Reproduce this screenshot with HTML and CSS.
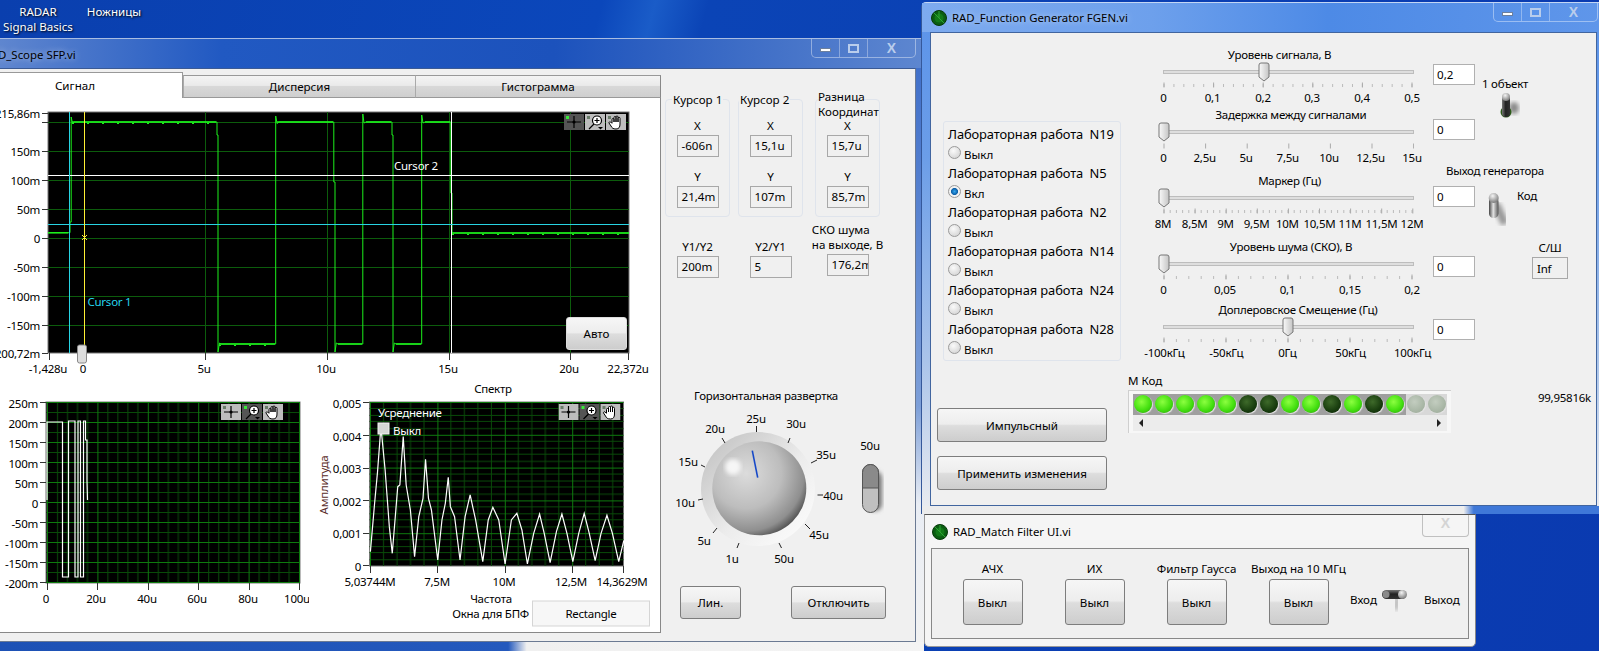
FILE: index.html
```html
<!DOCTYPE html>
<html lang="ru">
<head>
    <meta charset="UTF-8">
    <meta name="viewport" content="width=device-width, initial-scale=1.0">
    <title>RADAR Signal Basics</title>
    <link rel="stylesheet" href="styles.css">
</head>
<body>

<!-- shared drawings -->
<svg class="defs" aria-hidden="true">
    <defs>
        <linearGradient id="knobRim" x1="0" y1="0" x2="1" y2="1">
            <stop offset="0" stop-color="#bdbdbd"/>
            <stop offset="0.55" stop-color="#ececec"/>
            <stop offset="1" stop-color="#ffffff"/>
        </linearGradient>
        <radialGradient id="knobFace" cx="0.36" cy="0.34" r="0.75">
            <stop offset="0" stop-color="#dcdcdc"/>
            <stop offset="0.5" stop-color="#bdbdbd"/>
            <stop offset="0.82" stop-color="#8f8f8f"/>
            <stop offset="1" stop-color="#3c3c3c"/>
        </radialGradient>
        <linearGradient id="thumbFill" x1="0" y1="0" x2="1" y2="0">
            <stop offset="0" stop-color="#fafafa"/>
            <stop offset="1" stop-color="#c4c4c4"/>
        </linearGradient>
        <linearGradient id="darkLever" x1="0" y1="0" x2="1" y2="0">
            <stop offset="0" stop-color="#777"/>
            <stop offset="0.45" stop-color="#222"/>
            <stop offset="1" stop-color="#333"/>
        </linearGradient>
        <linearGradient id="lightLever" x1="0" y1="0" x2="1" y2="0">
            <stop offset="0" stop-color="#444"/>
            <stop offset="0.45" stop-color="#e4e4e4"/>
            <stop offset="1" stop-color="#555"/>
        </linearGradient>
        <linearGradient id="sideLever" x1="0" y1="0" x2="0" y2="1">
            <stop offset="0" stop-color="#777"/>
            <stop offset="0.45" stop-color="#222"/>
            <stop offset="1" stop-color="#333"/>
        </linearGradient>
        <radialGradient id="leverBall" cx="0.4" cy="0.3" r="0.7">
            <stop offset="0" stop-color="#f4f4f4"/>
            <stop offset="1" stop-color="#7c7c7c"/>
        </radialGradient>
        <filter id="soft"><feGaussianBlur stdDeviation="2"/></filter>

        <pattern id="gridWave" x="47" y="402" width="50.4" height="20" patternUnits="userSpaceOnUse">
            <path class="grid-minor" d="M10.5 0V20M20.5 0V20M30.5 0V20M40.5 0V20M0 10.5H50.4"/>
            <path class="grid-major" d="M0.5 0V20M0 0.5H50.4"/>
        </pattern>
        <pattern id="gridSpectrum" x="370" y="402" width="67.4" height="32.8" patternUnits="userSpaceOnUse">
            <path class="grid-minor" d="M13.5 0V32.8M27 0V32.8M40.5 0V32.8M54 0V32.8M0 6.5H67.4M0 13.5H67.4M0 19.5H67.4M0 26.5H67.4"/>
            <path class="grid-major" d="M0.5 0V32.8M0 0.5H67.4"/>
        </pattern>

        <symbol id="radarIcon" viewBox="0 0 16 16">
            <circle cx="8" cy="8" r="7.5" fill="#0b5d12" stroke="#063a09"/>
            <circle cx="8" cy="8" r="4.5" fill="#127a18"/>
            <path d="M3 3L13 13M8 1V8" stroke="#2fa635" fill="none"/>
        </symbol>

        <g id="toolGlyphs">
            <path class="glyph" d="M10 2V14M3 8H17"/>
            <circle cx="10" cy="8" r="1.6" fill="#000"/>
            <g transform="translate(21 0)">
                <circle class="glyph-lens" cx="12" cy="6.5" r="4.5"/>
                <path class="glyph" d="M12 4V9M9.5 6.5H14.5M9 10L4 15"/>
                <path d="M13 13H18L15.5 15.5Z" fill="#000"/>
            </g>
            <path class="glyph-hand" transform="translate(42 0)" d="M6 9V5.5a1 1 0 0 1 2 0V8V3.5a1 1 0 0 1 2 0V8V3a1 1 0 0 1 2 0V8V4.3a1 1 0 0 1 2 0V10c0 3-1 5-4 5s-4-1-5-3l-2-3a1 1 0 0 1 1.6-1L6 9.5"/>
        </g>
        <symbol id="paletteCursor" viewBox="0 0 62 16">
            <rect class="tool tool-on" width="20" height="16"/>
            <rect class="tool" x="21" width="20" height="16"/>
            <rect class="tool" x="42" width="20" height="16"/>
            <rect class="tool-led led-lit" x="2" y="2" width="3" height="3"/>
            <rect class="tool-led" x="23" y="2" width="3" height="3"/>
            <rect class="tool-led" x="44" y="2" width="3" height="3"/>
            <use href="#toolGlyphs"/>
        </symbol>
        <symbol id="paletteZoom" viewBox="0 0 62 16">
            <rect class="tool" width="20" height="16"/>
            <rect class="tool tool-on" x="21" width="20" height="16"/>
            <rect class="tool" x="42" width="20" height="16"/>
            <rect class="tool-led" x="2" y="2" width="3" height="3"/>
            <rect class="tool-led led-lit" x="23" y="2" width="3" height="3"/>
            <rect class="tool-led" x="44" y="2" width="3" height="3"/>
            <use href="#toolGlyphs"/>
        </symbol>
        <symbol id="thumb" viewBox="-6 -10 12 20" overflow="visible">
            <path class="thumb" d="M-5 -7a2 2 0 0 1 2-2h6a2 2 0 0 1 2 2V5L0 9L-5 5Z"/>
        </symbol>
    </defs>
</svg>

<div class="desktop">

    <div class="desktop-icons">
        <div class="desktop-icon">RADAR<br>Signal Basics</div>
        <div class="desktop-icon">Ножницы</div>
    </div>

    <!-- scope window -->
    <section class="window scope">
        <header class="titlebar">
            <span class="title-text title-clipped">D_Scope SFP.vi</span>
            <div class="win-controls">
                <span class="ctl ctl-min"><i></i></span>
                <span class="ctl ctl-max"><i></i></span>
                <span class="ctl ctl-close">X</span>
            </div>
        </header>
        <div class="panel scope-panel">
            <div class="tab-area">
                <div class="tabs">
                    <div class="tab tab-active">Сигнал</div>
                    <div class="tab tab-two">Дисперсия</div>
                    <div class="tab tab-three">Гистограмма</div>
                </div>
                <div class="tab-body">
                    <div class="main-chart">
                        <svg class="chart" width="660" height="282" viewBox="0 98 660 282">
                            <rect class="plot" x="48" y="112" width="581" height="241"/>
                            <path class="grid-main" d="M48 122.5H629M48 151.5H629M48 180.5H629M48 209.5H629M48 238.5H629M48 267.5H629M48 296.5H629M48 325.5H629M205.5 112V353M327.5 112V353M449.5 112V353M570.5 112V353"/>
                            <path class="trace" d="M48 232.7H70V222H71.2V117L72.5 123.5L74 122H217V135H218V352L219.5 343L221 344H275.7V116L277 123.5L279 122H333.8V182H335V352L336.3 343L338 344H362.8V114L364 123L366 122H392V135H393V352L394.3 343L396 344H421.7V115L423 123L425 122H450.8V193H452V233H629"/>
                            <path class="trace-thick" d="M48 232.7H68M72 122H216M277 122H333M366 122H391M425 122H450M219 344H275M338 344H362M396 344H421M452 233H629"/>
                            <path class="trace-noise" d="M72 123.5H216M219 345.5H275M452 234.5H629"/>
                            <path class="cursor-white" d="M48 175.5H629M451.5 112V353"/>
                            <path class="cursor-cyan" d="M48 224.5H629M69.5 112V353"/>
                            <path class="cursor-yellow" d="M84.5 112V353M82 235L87 240M87 235L82 240"/>
                            <text class="label-white" x="394" y="165">Cursor 2</text>
                            <text class="label-cyan" x="87.5" y="301">Cursor 1</text>
                            <use href="#paletteCursor" x="564" y="114" width="62" height="16"/>

                            <path class="axis" d="M42 113.5H48M42 122.5H48M42 151.5H48M42 180.5H48M42 209.5H48M42 238.5H48M42 267.5H48M42 296.5H48M42 325.5H48M42 353.5H48M49.5 353V360M205.5 353V360M327.5 353V360M449.5 353V360M570.5 353V360M628.5 353V360"/>
                            <text class="end" x="40" y="113">215,86m</text>
                            <text class="end" x="40" y="151">150m</text>
                            <text class="end" x="40" y="180">100m</text>
                            <text class="end" x="40" y="209">50m</text>
                            <text class="end" x="40" y="238">0</text>
                            <text class="end" x="40" y="267">-50m</text>
                            <text class="end" x="40" y="296">-100m</text>
                            <text class="end" x="40" y="325">-150m</text>
                            <text class="end" x="40" y="353">-200,72m</text>
                            <text class="mid" x="48" y="368">-1,428u</text>
                            <text class="mid" x="83" y="368">0</text>
                            <text class="mid" x="204" y="368">5u</text>
                            <text class="mid" x="326" y="368">10u</text>
                            <text class="mid" x="448" y="368">15u</text>
                            <text class="mid" x="569" y="368">20u</text>
                            <text class="mid" x="628" y="368">22,372u</text>
                            <rect class="scroll-thumb" x="77.5" y="345" width="9" height="18" rx="2"/>
                        </svg>
                        <button class="lv-btn auto-btn">Авто</button>
                    </div>

                    <div class="lower-charts">
                        <svg class="chart" width="309" height="253" viewBox="0 380 309 253">
                            <rect class="plot" x="46" y="402" width="254" height="181"/>
                            <rect fill="url(#gridWave)" x="46" y="402" width="254" height="181"/>
                            <path class="trace-white" d="M47 500V422H62.5V577H68.5V421H75V577H78V421H80.5V577H83.5V421H85.5V440H87V481L87.5 500"/>
                            <use href="#paletteZoom" x="221" y="404" width="62" height="16"/>
                            <path class="axis" d="M40 402.5H46M40 422.5H46M40 442.5H46M40 462.5H46M40 482.5H46M40 502.5H46M40 522.5H46M40 542.5H46M40 562.5H46M40 582.5H46M47.5 583V590M97.5 583V590M148.5 583V590M198.5 583V590M249.5 583V590M299.5 583V590"/>
                            <text class="end" x="38" y="403">250m</text>
                            <text class="end" x="38" y="423">200m</text>
                            <text class="end" x="38" y="443">150m</text>
                            <text class="end" x="38" y="463">100m</text>
                            <text class="end" x="38" y="483">50m</text>
                            <text class="end" x="38" y="503">0</text>
                            <text class="end" x="38" y="523">-50m</text>
                            <text class="end" x="38" y="543">-100m</text>
                            <text class="end" x="38" y="563">-150m</text>
                            <text class="end" x="38" y="583">-200m</text>
                            <text class="mid" x="46" y="598">0</text>
                            <text class="mid" x="96" y="598">20u</text>
                            <text class="mid" x="147" y="598">40u</text>
                            <text class="mid" x="197" y="598">60u</text>
                            <text class="mid" x="248" y="598">80u</text>
                            <text class="mid" x="297" y="598">100u</text>
                        </svg>
                        <svg class="chart" width="351" height="253" viewBox="309 380 351 253">
                            <text class="mid" x="493" y="388">Спектр</text>
                            <rect class="plot" x="369.5" y="402" width="254" height="164"/>
                            <rect fill="url(#gridSpectrum)" x="369.5" y="402" width="254" height="164"/>
                            <!-- points traced from the screenshot, scale maps them onto the plot -->
                            <polyline class="trace-white scaled" transform="matrix(.4209 0 0 .3333 0 370)" points="880,545 890,400 897,305 905,170 915,300 925,470 932,550 945,350 950,345 958,200 965,345 975,420 985,560 995,440 1005,385 1011,268 1018,385 1025,420 1040,570 1050,450 1058,400 1065,322 1070,410 1080,440 1093,570 1105,440 1117,375 1130,450 1147,575 1160,450 1171,412 1185,450 1200,582 1215,450 1228,430 1240,480 1253,582 1268,490 1282,432 1293,490 1307,578 1322,485 1335,432 1347,490 1361,575 1375,490 1388,430 1400,490 1414,572 1428,490 1442,436 1455,490 1470,575 1482,512"/>
                            <text class="label-white" x="378" y="412">Усреднение</text>
                            <rect class="check" x="378" y="423" width="11" height="11"/>
                            <text class="label-white" x="393" y="430">Выкл</text>
                            <use href="#paletteZoom" x="558.5" y="404" width="62" height="16"/>
                            <path class="axis" d="M363 402.5H369M363 435.5H369M363 468.5H369M363 500.5H369M363 533.5H369M363 565.5H369M370.5 566V573M437.5 566V573M505.5 566V573M572.5 566V573M623.5 566V573"/>
                            <text class="end" x="361" y="403">0,005</text>
                            <text class="end" x="361" y="436">0,004</text>
                            <text class="end" x="361" y="468">0,003</text>
                            <text class="end" x="361" y="501">0,002</text>
                            <text class="end" x="361" y="533">0,001</text>
                            <text class="end" x="361" y="566">0</text>
                            <text class="axis-name" transform="translate(323 485) rotate(-90)">Амплитуда</text>
                            <text class="mid" x="370" y="581">5,03744M</text>
                            <text class="mid" x="437" y="581">7,5M</text>
                            <text class="mid" x="504" y="581">10M</text>
                            <text class="mid" x="571" y="581">12,5M</text>
                            <text class="mid" x="622" y="581">14,3629M</text>
                            <text class="mid" x="491" y="598">Частота</text>
                            <text class="end" x="529" y="613">Окна для БПФ</text>
                            <rect class="ring" x="532.5" y="601" width="117" height="25"/>
                            <text class="mid" x="591" y="613">Rectangle</text>
                        </svg>
                    </div>
                </div>
            </div>

            <div class="side">
                <div class="cursor-groups">
                    <div class="group group-one">
                        <div class="group-title">Курсор 1</div>
                        <div class="readout-label">X</div>
                        <div class="readout">-606n</div>
                        <div class="readout-label next">Y</div>
                        <div class="readout">21,4m</div>
                    </div>
                    <div class="group group-two">
                        <div class="group-title">Курсор 2</div>
                        <div class="readout-label">X</div>
                        <div class="readout">15,1u</div>
                        <div class="readout-label next">Y</div>
                        <div class="readout">107m</div>
                    </div>
                    <div class="group group-three">
                        <div class="group-title">Разница<br>Координат</div>
                        <div class="readout-label">X</div>
                        <div class="readout">15,7u</div>
                        <div class="readout-label next">Y</div>
                        <div class="readout">85,7m</div>
                    </div>
                </div>
                <div class="ratio-row">
                    <div class="ratio">
                        <div class="readout-label">Y1/Y2</div>
                        <div class="readout">200m</div>
                    </div>
                    <div class="ratio ratio-two">
                        <div class="readout-label">Y2/Y1</div>
                        <div class="readout">5</div>
                    </div>
                    <div class="ratio ratio-three">
                        <div class="ratio-note">СКО шума<br>на выходе, В</div>
                        <div class="readout readout-clip">176,2m</div>
                    </div>
                </div>
                <svg class="chart knob-view" width="255" height="190" viewBox="661 380 255 190">
                    <text x="694" y="396">Горизонтальная развертка</text>
                    <circle cx="758" cy="490" r="57" fill="url(#knobRim)"/>
                    <circle cx="759.3" cy="489.3" r="47" fill="url(#knobFace)"/>
                    <circle cx="733" cy="468" r="8" fill="#f6f6f6" filter="url(#soft)"/>
                    <path class="needle" d="M752.3 451.7L757.7 478.7"/>
                    <path class="knob-ticks" d="M756.5 427V433M790 439L788 444M817 461L811 464M817.5 496H823M805 525L810 530M779 544L781.5 549M739 544L737 549M717 529L713 534M703 500L698 501M705 468L701 466M725 444L722 439"/>
                    <text class="mid" x="756" y="419">25u</text>
                    <text class="mid" x="796" y="424">30u</text>
                    <text class="mid" x="826" y="455">35u</text>
                    <text class="mid" x="833" y="496">40u</text>
                    <text class="mid" x="819" y="535">45u</text>
                    <text class="mid" x="784" y="559">50u</text>
                    <text class="mid" x="732" y="559">1u</text>
                    <text class="mid" x="704" y="541">5u</text>
                    <text class="mid" x="685" y="503">10u</text>
                    <text class="mid" x="688" y="462">15u</text>
                    <text class="mid" x="715" y="429">20u</text>
                    <text class="mid" x="870" y="446">50u</text>
                    <rect x="868" y="472" width="14" height="40" rx="7" fill="#777" filter="url(#soft)"/>
                    <rect class="pill-low" x="862.5" y="465.5" width="16" height="48" rx="8"/>
                    <path class="pill-high" d="M862.5 489V473.5a8 8 0 0 1 16 0V489Z"/>
                </svg>
                <div class="side-buttons">
                    <button class="lv-btn lin-btn">Лин.</button>
                    <button class="lv-btn off-btn">Отключить</button>
                </div>
            </div>
        </div>
        <div class="scope-foot"></div>
    </section>

    <!-- function generator window -->
    <section class="window fgen">
        <header class="titlebar">
            <svg class="vi-icon" width="16" height="16"><use href="#radarIcon"/></svg>
            <span class="title-text">RAD_Function Generator FGEN.vi</span>
            <div class="win-controls">
                <span class="ctl ctl-min"><i></i></span>
                <span class="ctl ctl-max"><i></i></span>
                <span class="ctl ctl-close">X</span>
            </div>
        </header>
        <div class="panel fgen-panel">
            <div class="fgen-left">
                <div class="lab-group">
                    <div class="lab-title">Лабораторная работа&nbsp; N19</div>
                    <div class="lab-choice"><span class="radio"></span>Выкл</div>
                    <div class="lab-title">Лабораторная работа&nbsp; N5</div>
                    <div class="lab-choice"><span class="radio radio-on"></span>Вкл</div>
                    <div class="lab-title">Лабораторная работа&nbsp; N2</div>
                    <div class="lab-choice"><span class="radio"></span>Выкл</div>
                    <div class="lab-title">Лабораторная работа&nbsp; N14</div>
                    <div class="lab-choice"><span class="radio"></span>Выкл</div>
                    <div class="lab-title">Лабораторная работа&nbsp; N24</div>
                    <div class="lab-choice"><span class="radio"></span>Выкл</div>
                    <div class="lab-title">Лабораторная работа&nbsp; N28</div>
                    <div class="lab-choice"><span class="radio"></span>Выкл</div>
                </div>
                <button class="lv-btn wide-btn pulse-btn">Импульсный</button>
                <button class="lv-btn wide-btn apply-btn">Применить изменения</button>
            </div>

            <div class="fgen-middle">
                <div class="slider-row">
                    <svg class="chart" width="312" height="58" viewBox="1120 46 312 58">
                        <text class="mid" x="1278.5" y="54">Уровень сигнала, В</text>
                        <rect class="track" x="1162.5" y="70.5" width="250" height="3"/>
                        <use href="#thumb" x="1257" y="62" width="12" height="20"/>
                        <path class="ticks-minor" stroke-dasharray="1 8.92" d="M1162.5 85.5H1413"/>
                        <path class="ticks-major" stroke-dasharray="1 48.6" d="M1162.5 85H1413"/>
                        <text class="mid" x="1162.5" y="97">0</text>
                        <text class="mid" x="1211.5" y="97">0,1</text>
                        <text class="mid" x="1262" y="97">0,2</text>
                        <text class="mid" x="1311" y="97">0,3</text>
                        <text class="mid" x="1361" y="97">0,4</text>
                        <text class="mid" x="1411" y="97">0,5</text>
                    </svg>
                    <div class="num-box">0,2</div>
                </div>
                <div class="slider-row row-delay">
                    <svg class="chart" width="312" height="58" viewBox="1120 106 312 58">
                        <text class="mid" x="1290" y="114">Задержка между сигналами</text>
                        <rect class="track" x="1162.5" y="130.5" width="250" height="3"/>
                        <use href="#thumb" x="1157" y="122" width="12" height="20"/>
                        <path class="ticks-major" stroke-dasharray="1 40.6" d="M1162.5 146H1413"/>
                        <text class="mid" x="1162.5" y="157">0</text>
                        <text class="mid" x="1203.7" y="157">2,5u</text>
                        <text class="mid" x="1245" y="157">5u</text>
                        <text class="mid" x="1286.8" y="157">7,5u</text>
                        <text class="mid" x="1328" y="157">10u</text>
                        <text class="mid" x="1369.6" y="157">12,5u</text>
                        <text class="mid" x="1411" y="157">15u</text>
                    </svg>
                    <div class="num-box">0</div>
                </div>
                <div class="slider-row row-marker">
                    <svg class="chart" width="312" height="58" viewBox="1120 172 312 58">
                        <text class="mid" x="1288.5" y="180">Маркер (Гц)</text>
                        <rect class="track" x="1162.5" y="196.5" width="250" height="3"/>
                        <use href="#thumb" x="1157" y="188" width="12" height="20"/>
                        <path class="ticks-minor" stroke-dasharray="1 5.2" d="M1162.5 211.5H1413"/>
                        <path class="ticks-major" stroke-dasharray="1 30.1" d="M1162.5 211H1413"/>
                        <text class="mid" x="1162" y="223">8M</text>
                        <text class="mid" x="1193.7" y="223">8,5M</text>
                        <text class="mid" x="1224.5" y="223">9M</text>
                        <text class="mid" x="1255.6" y="223">9,5M</text>
                        <text class="mid" x="1286.4" y="223">10M</text>
                        <text class="mid" x="1318.4" y="223">10,5M</text>
                        <text class="mid" x="1349" y="223">11M</text>
                        <text class="mid" x="1380.4" y="223">11,5M</text>
                        <text class="mid" x="1411" y="223">12M</text>
                    </svg>
                    <div class="num-box">0</div>
                </div>
                <div class="slider-row row-noise">
                    <svg class="chart" width="312" height="58" viewBox="1120 238 312 58">
                        <text class="mid" x="1290" y="246">Уровень шума (СКО), В</text>
                        <rect class="track" x="1162.5" y="262.5" width="250" height="3"/>
                        <use href="#thumb" x="1157" y="254" width="12" height="20"/>
                        <path class="ticks-minor" stroke-dasharray="1 11.4" d="M1162.5 277.5H1413"/>
                        <path class="ticks-major" stroke-dasharray="1 61" d="M1162.5 277H1413"/>
                        <text class="mid" x="1162.5" y="289">0</text>
                        <text class="mid" x="1224" y="289">0,05</text>
                        <text class="mid" x="1286.4" y="289">0,1</text>
                        <text class="mid" x="1349" y="289">0,15</text>
                        <text class="mid" x="1411" y="289">0,2</text>
                    </svg>
                    <div class="num-box">0</div>
                </div>
                <div class="slider-row row-doppler">
                    <svg class="chart" width="312" height="58" viewBox="1120 301 312 58">
                        <text class="mid" x="1297" y="309">Доплеровское Смещение (Гц)</text>
                        <rect class="track" x="1162.5" y="325.5" width="250" height="3"/>
                        <use href="#thumb" x="1281" y="317" width="12" height="20"/>
                        <path class="ticks-minor" stroke-dasharray="1 11.4" d="M1162.5 340.5H1413"/>
                        <path class="ticks-major" stroke-dasharray="1 61" d="M1162.5 340H1413"/>
                        <text class="mid" x="1163.4" y="352">-100кГц</text>
                        <text class="mid" x="1225.3" y="352">-50кГц</text>
                        <text class="mid" x="1286.4" y="352">0Гц</text>
                        <text class="mid" x="1349.6" y="352">50кГц</text>
                        <text class="mid" x="1411.5" y="352">100кГц</text>
                    </svg>
                    <div class="num-box">0</div>
                </div>

                <div class="led-array">
                    <div class="led-caption">М Код</div>
                    <div class="led-frame">
                        <div class="led-strip">
                            <span class="led on"></span><span class="led on"></span><span class="led on"></span><span class="led on"></span><span class="led on"></span>
                            <span class="led off"></span><span class="led off"></span>
                            <span class="led on"></span><span class="led on"></span>
                            <span class="led off"></span>
                            <span class="led on"></span>
                            <span class="led off"></span>
                            <span class="led on"></span>
                            <span class="led dim"></span><span class="led dim"></span>
                        </div>
                        <div class="led-scroll"><i class="arrow-left"></i><i class="arrow-right"></i></div>
                    </div>
                </div>
            </div>

            <svg class="chart fgen-right" width="160" height="380" viewBox="1436 32 160 380">
                <text x="1481" y="83">1 объект</text>
                <ellipse cx="1513" cy="108" rx="5" ry="6" fill="#8a8a8a" filter="url(#soft)"/>
                <circle cx="1505" cy="112" r="5.5" fill="#2c5a1a"/>
                <rect x="1501" y="96" width="8" height="21" rx="4" fill="url(#darkLever)"/>
                <circle cx="1505" cy="97" r="4" fill="url(#leverBall)"/>

                <text x="1445" y="170">Выход генератора</text>
                <text x="1516" y="195">Код</text>
                <path d="M1495 204L1504 224" stroke="#999" stroke-width="8" filter="url(#soft)"/>
                <rect x="1488" y="197" width="9.5" height="21" rx="4.5" fill="url(#lightLever)"/>
                <circle cx="1492.7" cy="198" r="5" fill="url(#leverBall)"/>

                <text class="mid" x="1549" y="247">С/Ш</text>
                <rect class="readout-rect" x="1531.5" y="257.5" width="35" height="21"/>
                <text x="1536" y="268">Inf</text>
                <text class="end" x="1590" y="397">99,95816k</text>
            </svg>
        </div>
        <div class="fgen-foot"></div>
    </section>

    <!-- matched filter window -->
    <section class="window match">
        <header class="titlebar match-bar">
            <svg class="vi-icon" width="16" height="16"><use href="#radarIcon"/></svg>
            <span class="title-text">RAD_Match Filter UI.vi</span>
            <div class="match-close">X</div>
        </header>
        <div class="panel match-panel">
            <div class="switch-col">
                <div class="switch-label">АЧХ</div>
                <button class="lv-btn switch-btn">Выкл</button>
            </div>
            <div class="switch-col">
                <div class="switch-label">ИХ</div>
                <button class="lv-btn switch-btn">Выкл</button>
            </div>
            <div class="switch-col">
                <div class="switch-label">Фильтр Гаусса</div>
                <button class="lv-btn switch-btn">Выкл</button>
            </div>
            <div class="switch-col">
                <div class="switch-label">Выход на 10 МГц</div>
                <button class="lv-btn switch-btn">Выкл</button>
            </div>
            <div class="io-switch">
                <span>Вход</span>
                <svg width="30" height="28" viewBox="0 0 30 28">
                    <path d="M16 11L15 24" stroke="#bbb" stroke-width="6" filter="url(#soft)"/>
                    <rect x="1" y="4" width="24" height="9" rx="4.5" fill="url(#sideLever)"/>
                    <circle cx="21.5" cy="8.5" r="4.5" fill="url(#leverBall)"/>
                    <circle cx="5" cy="8.5" r="3.5" fill="#8a8a8a"/>
                </svg>
                <span class="io-out">Выход</span>
            </div>
        </div>
    </section>
</div>

</body>
</html>
```
FILE: styles.css
```css
* {
    box-sizing: border-box;
}
body {
    margin: 0;
    width: 1599px;
    height: 651px;
    overflow: hidden;
    font-family: "Noto Sans", Arial, sans-serif;
    font-size: 11.6px;
    color: #000;
}
button {
    font: inherit;
}
.defs {
    position: absolute;
    width: 0;
    height: 0;
}
.desktop {
    position: relative;
    width: 1599px;
    height: 651px;
    overflow: hidden;
    background: linear-gradient(105deg, #0a3fae 0%, #0b47bb 34%, #1a5cc8 37%, #0b44b6 40%, #0a3ab0 100%);
}
.desktop-icons {
    position: absolute;
    left: 0;
    top: 4px;
    display: flex;
}
.desktop-icon {
    width: 76px;
    line-height: 15px;
    text-align: center;
    color: #fff;
    text-shadow: 1px 1px 2px #000;
}

/* windows */
.window {
    position: absolute;
    display: flex;
    flex-direction: column;
}
.scope {
    left: 0;
    top: 38px;
    width: 924px;
    height: 613px;
    z-index: 1;
    border-top: 1px solid #a9bde2;
    background: linear-gradient(#3d6dc9 0, #5a84d0 30%, #7d9fd8 60%, #e9edf4 76%, #f2f2f2 100%);
}
.fgen {
    left: 921px;
    top: 2px;
    width: 678px;
    height: 512px;
    z-index: 2;
    border-top: 1px solid #c3d6f4;
    border-left: 1px solid #35589a;
    border-top-left-radius: 5px;
    background: linear-gradient(#5b93ea 0, #6b9de8 30%, #aac4ea 70%, #ecedf0 100%);
}
.match {
    left: 924px;
    top: 514px;
    width: 552px;
    height: 133px;
    z-index: 3;
    border-top: 1px solid #555;
    border-left: 1px solid #999;
    border-right: 1px solid #888;
    border-bottom: 1px solid #999;
    border-radius: 0 0 5px 5px;
    background: #f5f5f5;
}
.titlebar {
    display: flex;
    align-items: center;
    flex: none;
    height: 29px;
}
.scope .titlebar {
    background: linear-gradient(90deg, #5f86cf 0, #2159c2 24%, #1c52bc 60%, #5e87d0 100%);
}
.fgen .titlebar {
    background: linear-gradient(90deg, #7eabef 0, #6da0ec 34%, #4d8ae6 60%, #5f96ea 100%);
}
.title-text {
    font-size: 11.4px;
    text-shadow: 0 0 6px #ffffffaa;
}
.title-clipped {
    margin-left: -2px;
    padding-top: 2px;
}
.vi-icon {
    flex: none;
    margin-left: 9px;
    margin-right: 5px;
}
.win-controls {
    display: flex;
    align-self: flex-start;
    height: 19px;
    margin-left: auto;
    border: 1px solid #ffffff66;
    border-top: 0;
    border-radius: 0 0 5px 5px;
}
.scope .win-controls {
    margin-right: 8px;
}
.fgen .win-controls {
    margin-right: 1px;
}
.ctl {
    display: flex;
    align-items: center;
    justify-content: center;
    width: 28px;
    border-right: 1px solid #ffffff55;
}
.ctl-close {
    width: 47px;
    border-right: 0;
    font-family: "Liberation Sans", Arial, sans-serif;
    font-size: 14px;
    font-weight: bold;
    color: #b9cdec;
}
.ctl-min i {
    display: block;
    width: 11px;
    height: 4px;
    margin-top: 4px;
    background: #fff;
    border: 1px solid #6c7f9d;
}
.ctl-max i {
    display: block;
    width: 11px;
    height: 9px;
    border: 2px solid #b9cdec;
}
.panel {
    background: #f0f0f0;
}

/* scope panel */
.scope-panel {
    display: flex;
    flex: none;
    height: 574px;
    margin-right: 8px;
    border-top: 1px solid #3b5a94;
    border-right: 1px solid #6b7a93;
    border-bottom: 1px solid #6b7a93;
}
.scope-foot {
    flex: 1;
    background: linear-gradient(90deg, #1d51b5 0, #2459bd 55%, #f0f0f0 57%, #f4f4f4 100%);
}
.tab-area {
    flex: none;
    width: 661px;
    padding-top: 3px;
}
.tabs {
    display: flex;
    height: 26px;
    align-items: flex-end;
}
.tab {
    display: flex;
    align-items: center;
    justify-content: center;
    height: 23px;
    background: linear-gradient(#f4f4f4 0, #eaeaea 45%, #d8d8d8 50%, #cfcfcf 100%);
    border-top: 1px solid #999;
    border-left: 1px solid #aaa;
    border-bottom: 1px solid #999;
}
.tab-active {
    width: 183px;
    height: 26px;
    padding-right: 32px;
    background: #fff;
    border-left: 0;
    border-right: 1px solid #999;
    border-bottom: 0;
}
.tab-two {
    width: 232px;
}
.tab-three {
    width: 246px;
    border-right: 1px solid #888;
}
.tab-body {
    height: 535px;
    background: #fff;
    border-right: 1px solid #888;
    border-bottom: 1px solid #888;
}
.main-chart {
    position: relative;
}
.chart {
    display: block;
}
.chart text {
    font-family: "Noto Sans", Arial, sans-serif;
    font-size: 11.5px;
    letter-spacing: -0.25px;
    dominant-baseline: central;
}
.chart .mid {
    text-anchor: middle;
}
.chart .end {
    text-anchor: end;
}
.lower-charts {
    display: flex;
}
.plot {
    fill: #000;
    stroke: #777;
}
.grid-main {
    fill: none;
    stroke: #0c5c0c;
    shape-rendering: crispEdges;
}
.grid-minor {
    fill: none;
    stroke: #094a09;
}
.grid-major {
    fill: none;
    stroke: #0e7a0e;
}
.trace {
    fill: none;
    stroke: #1cf01c;
    stroke-width: 1;
}
.trace-thick {
    fill: none;
    stroke: #1cf01c;
    stroke-width: 1.6;
}
.trace-noise {
    fill: none;
    stroke: #1cf01c;
    stroke-dasharray: 2 13;
}
.trace-white {
    fill: none;
    stroke: #fff;
    stroke-width: 1.2;
}
.scaled {
    vector-effect: non-scaling-stroke;
}
.cursor-white {
    fill: none;
    stroke: #fff;
    stroke-width: 1;
}
.cursor-cyan {
    fill: none;
    stroke: #28d4e4;
}
.cursor-yellow {
    fill: none;
    stroke: #ffef33;
}
.chart .label-white {
    fill: #fff;
}
.chart .label-cyan {
    fill: #26d6ee;
}
.chart .axis-name {
    text-anchor: middle;
    fill: #5a2d2a;
}
.axis {
    fill: none;
    stroke: #333;
    shape-rendering: crispEdges;
}
.scroll-thumb {
    fill: #ddd;
    stroke: #888;
}
.check {
    fill: #d6d6d6;
    stroke: #f4f4f4;
}
.ring {
    fill: #f7f7f7;
    stroke: #d5d5d5;
}
.tool {
    fill: #bdbdbd;
}
.tool-on {
    fill: #555;
}
.tool-led {
    fill: #6a7d6a;
}
.led-lit {
    fill: #39e83a;
}
.glyph {
    fill: none;
    stroke: #000;
    stroke-width: 1.2;
}
.glyph-lens {
    fill: #fff;
    stroke: #000;
    stroke-width: 1.2;
}
.glyph-hand {
    fill: #fff;
    stroke: #000;
}

/* LabVIEW style buttons */
.lv-btn {
    display: block;
    padding: 0;
    border: 1px solid #7d7d7d;
    border-radius: 3px;
    background: linear-gradient(#f6f6f6 0, #ededed 47%, #dddddd 52%, #cdcdcd 100%);
    color: #000;
}
.auto-btn {
    position: absolute;
    left: 566px;
    top: 219px;
    width: 61px;
    height: 33px;
    border-color: #ddd;
}

/* readouts beside the tabs */
.side {
    width: 254px;
    padding-left: 4px;
}
.cursor-groups {
    display: flex;
    margin-top: 30px;
}
.group {
    position: relative;
    flex: none;
    width: 65px;
    height: 118px;
    padding-top: 19px;
    border: 1px solid #dfe4ec;
    border-radius: 4px;
    text-align: center;
}
.group-two {
    margin-left: 8px;
}
.group-three {
    margin-left: 12px;
}
.group-title {
    position: absolute;
    top: -8px;
    left: 6px;
    line-height: 15px;
    padding: 0 1px;
    white-space: nowrap;
    text-align: left;
    background: #f0f0f0;
}
.group-two .group-title {
    left: 0;
}
.group-three .group-title {
    top: -11px;
    left: 1px;
    background: none;
}
.readout-label {
    height: 14px;
    line-height: 14px;
    margin-bottom: 2px;
    text-align: center;
}
.readout-label.next {
    margin-top: 13px;
}
.readout {
    width: 42px;
    height: 22px;
    line-height: 20px;
    margin: 0 auto;
    padding: 0 4px;
    overflow: hidden;
    white-space: nowrap;
    border: 1px solid #a8a8a8;
    text-align: left;
}
.ratio-row {
    display: flex;
    align-items: flex-end;
    height: 54px;
    margin-top: 7px;
}
.ratio {
    flex: none;
    width: 65px;
}
.ratio-two {
    margin-left: 8px;
}
.ratio-three {
    display: flex;
    flex-direction: column;
    align-items: center;
    margin-left: 12px;
    margin-bottom: 2px;
}
.ratio-note {
    line-height: 15px;
    margin-bottom: 2px;
    white-space: nowrap;
}
.knob-view {
    margin-top: 101px;
    margin-left: -4px;
}
.needle {
    fill: none;
    stroke: #1548c8;
    stroke-width: 1.6;
}
.knob-ticks {
    fill: none;
    stroke: #222;
}
.pill-low {
    fill: #c0c0c0;
    stroke: #555;
}
.pill-high {
    fill: #8a8a8a;
    stroke: #555;
}
.side-buttons {
    display: flex;
    margin-top: 17px;
    margin-left: 15px;
}
.lin-btn {
    width: 61px;
    height: 33px;
}
.off-btn {
    width: 95px;
    height: 33px;
    margin-left: 50px;
}

/* function generator */
.fgen-panel {
    position: relative;
    display: flex;
    flex: none;
    height: 474px;
    margin-left: 8px;
    margin-right: 2px;
    border: 1px solid #41659f;
}
.fgen-foot {
    flex: 1;
    background: linear-gradient(90deg, #ececec 0, #eeeeee 80%, #3f78d8 81.5%, #3f78d8 100%);
}
.fgen-left {
    flex: none;
    width: 190px;
    padding-left: 12px;
}
.lab-group {
    width: 178px;
    height: 240px;
    margin-top: 88px;
    padding: 3px 4px;
    border: 1px solid #dfe4ec;
    border-radius: 3px;
}
.lab-title,
.lab-choice {
    height: 19.5px;
    line-height: 19.5px;
    white-space: nowrap;
}
.lab-title {
    font-size: 12.9px;
    letter-spacing: -0.1px;
}
.lab-choice {
    display: flex;
    align-items: center;
}
.radio {
    display: block;
    flex: none;
    width: 13px;
    height: 13px;
    margin-right: 3px;
    margin-top: -4px;
    border: 1px solid #9a9a9a;
    border-radius: 50%;
    background: radial-gradient(circle at 40% 35%, #fafafa, #cdcdcd);
}
.radio-on {
    background: radial-gradient(circle, #35a7ee 0, #0a5ea8 40%, #f2f2f2 50%);
}
.wide-btn {
    width: 170px;
    height: 34px;
    margin-left: -6px;
}
.pulse-btn {
    margin-top: 47px;
}
.apply-btn {
    margin-top: 14px;
}
.fgen-middle {
    flex: none;
    width: 354px;
    padding-top: 13px;
}
.slider-row {
    display: flex;
    align-items: flex-start;
}
.row-delay {
    margin-top: 2px;
}
.row-marker,
.row-noise {
    margin-top: 8px;
}
.row-doppler {
    margin-top: 5px;
}
.num-box {
    flex: none;
    width: 42px;
    height: 21px;
    margin-top: 18px;
    padding-left: 3px;
    line-height: 19px;
    border: 1px solid #b0b0b0;
    background: #fff;
}
.row-delay .num-box {
    margin-top: 13px;
}
.row-marker .num-box {
    margin-top: 14px;
}
.track {
    fill: #dedede;
    stroke: #bdbdbd;
}
.thumb {
    fill: url(#thumbFill);
    stroke: #777;
}
.ticks-minor {
    fill: none;
    stroke: #bbb;
    stroke-width: 3;
}
.ticks-major {
    fill: none;
    stroke: #aaa;
    stroke-width: 5;
}
.fgen-right {
    position: absolute;
    left: 506px;
    top: -1px;
}
.readout-rect {
    fill: none;
    stroke: #a8a8a8;
}
.led-array {
    margin-top: 15px;
    margin-left: 7px;
}
.led-caption {
    height: 16px;
    line-height: 14px;
}
.led-frame {
    width: 323px;
    height: 43px;
    padding: 3px 4px;
    background: #f7f7f7;
    border-top: 1px solid #cfcfcf;
    border-left: 1px solid #cfcfcf;
}
.led-strip {
    display: flex;
    gap: 3px;
    height: 21px;
    padding: 1px 0 0 1px;
    overflow: hidden;
    background: linear-gradient(90deg, #9f9f9f 273px, #d8d8d8 273px);
}
.led {
    flex: none;
    width: 18px;
    height: 18px;
    border-radius: 50%;
    box-shadow: 1px 1px 1px #e4e4e4;
}
.led.on {
    background: radial-gradient(circle at 42% 38%, #8cff40, #44e010 55%, #28a00a 100%);
}
.led.off {
    background: radial-gradient(circle at 42% 38%, #3e6a2a, #183c0e 60%, #0d2607 100%);
}
.led.dim {
    background: radial-gradient(circle at 42% 38%, #c3cdc0, #a5b3a2 70%, #93a18f 100%);
}
.led-scroll {
    display: flex;
    align-items: center;
    justify-content: space-between;
    height: 16px;
    padding: 0 6px;
    background: #ececec;
}
.arrow-left {
    width: 0;
    height: 0;
    border: 4px solid transparent;
    border-left: 0;
    border-right-color: #222;
}
.arrow-right {
    width: 0;
    height: 0;
    border: 4px solid transparent;
    border-right: 0;
    border-left-color: #222;
}

/* matched filter */
.match-bar {
    position: relative;
    height: 33px;
}
.match-bar .vi-icon {
    margin-left: 7px;
}
.match-close {
    position: absolute;
    right: 6px;
    top: 0;
    width: 47px;
    height: 22px;
    border: 1px solid #c0c0c0;
    border-top: 0;
    border-radius: 0 0 4px 4px;
    text-align: center;
    font-family: "Liberation Sans", Arial, sans-serif;
    font-size: 14px;
    font-weight: bold;
    color: #d4d4d4;
}
.match-panel {
    display: flex;
    gap: 43px;
    flex: none;
    width: 538px;
    height: 91px;
    margin-left: 6px;
    padding-left: 31px;
    border: 1px solid #888;
}
.switch-col {
    display: flex;
    flex-direction: column;
    align-items: center;
    flex: none;
    width: 59px;
    padding-top: 13px;
}
.switch-label {
    height: 17px;
    line-height: 14px;
    white-space: nowrap;
}
.switch-btn {
    width: 60px;
    height: 46px;
}
.io-switch {
    display: flex;
    align-items: center;
    gap: 4px;
    margin-left: -21px;
    padding-top: 12px;
}
.io-out {
    margin-left: 9px;
}
```
